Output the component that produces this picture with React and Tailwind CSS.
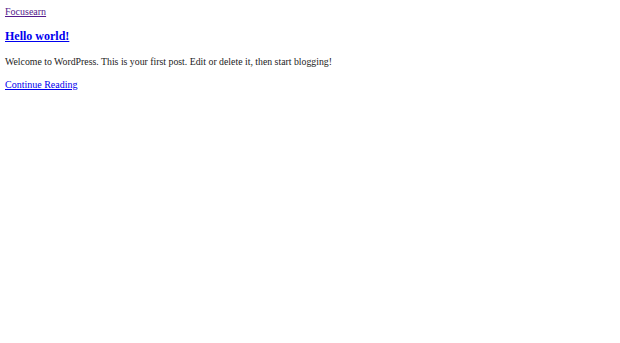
export default function App() {
  return (
    <div className="min-h-[343px] bg-white px-[5px] pt-[5px] text-[10px] leading-[13px] text-[#222] font-['Liberation_Serif',serif]">
      <a href="#" className="text-[#551a8b] underline">Focusearn</a>
      <h2 className="mt-[11px] text-[12px] leading-[15px] font-bold">
        <a href="#" className="text-[#0000ee] underline">Hello world!</a>
      </h2>
      <p className="mt-[11px] text-[9.8px]">
        Welcome to WordPress. This is your first post. Edit or delete it, then start blogging!
      </p>
      <p className="mt-[10px]">
        <a href="#" className="text-[#0000ee] underline">Continue Reading</a>
      </p>
    </div>
  );
}
